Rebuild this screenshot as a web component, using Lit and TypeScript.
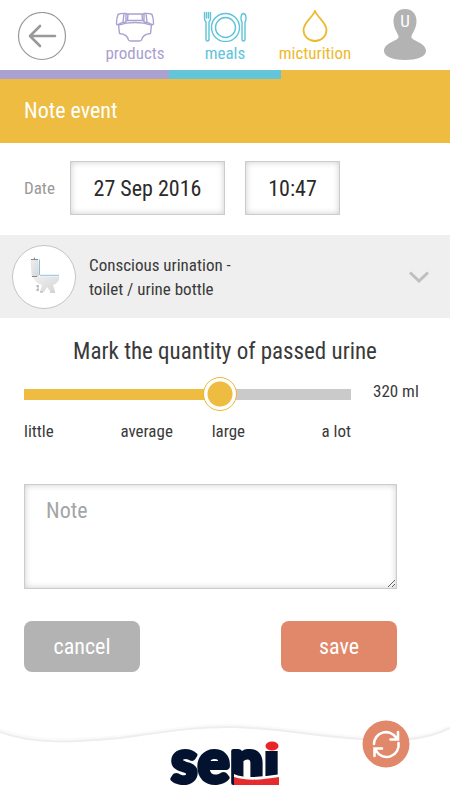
import { LitElement, html, css, svg } from "lit";
import { customElement, state } from "lit/decorators.js";

const diaperIcon = svg`<svg width="40" height="32" viewBox="0 0 40 32" fill="none" stroke="#a9a1cf" stroke-width="1.400" stroke-linejoin="round">
  <path d="M11 3.500Q6 3 3 4.500Q1.500 8 1.500 13.500Q1.500 15 3 14.500Q7 12 11 12Z"/>
  <path d="M29 3.500Q34 3 37 4.500Q38.500 8 38.500 13.500Q38.500 15 37 14.500Q33 12 29 12Z"/>
  <path d="M9 3.500L8 12M31 3.500L32 12M11 4H29M11 10.500H29M13 4L12.500 10.500M27 4L27.500 10.500"/>
  <path d="M3.500 15Q11 12.500 20 12.500Q29 12.500 36.500 15L35.500 23.500Q28 24 26.500 30Q26 31 24 31H16Q14 31 13.500 30Q12 24 4.500 23.500Z"/>
</svg>`;

const mealIcon = svg`<svg width="44" height="32" viewBox="0 0 44 32" fill="none" stroke="#5fc4d9" stroke-width="1.400" stroke-linecap="round">
  <circle cx="22.500" cy="17.500" r="14"/><circle cx="22.500" cy="17.500" r="10"/>
  <path d="M1.500 2.500V8Q1.500 11 3 12V29Q3 31 4.500 31T6 29V12Q7.500 11 7.500 8V2.500M3.500 2.500V8M5.500 2.500V8"/>
  <path d="M40.500 3.500Q38 4 38 8Q38 11 39 12V29Q39 31 40.500 31T42 29V12Q43 11 43 8Q43 4 40.500 3.500Z"/>
</svg>`;

const dropIcon = svg`<svg width="26" height="32" viewBox="0 0 26 32" fill="none" stroke="#edb92e" stroke-width="1.800">
  <path d="M13 1C10 8 1.500 13 1.500 20A11.500 11 0 0 0 24.500 20C24.500 13 16 8 13 1Z"/>
</svg>`;

@customElement("app-root")
export class AppRoot extends LitElement {
  static styles = css`
    :host {
      display: flex;
      flex-direction: column;
      min-height: 100vh;
      background: #fff;
      color: #3a3a3a;
      font: 17px/24px "Roboto Condensed", "Liberation Sans Narrow", Roboto, sans-serif;
    }
    * { box-sizing: border-box; }
    button, input, textarea { font: inherit; color: inherit; }
    button { border: 0; padding: 0; background: none; cursor: pointer; }
    svg { display: block; }
    .top {
      display: grid;
      grid-template-columns: repeat(5, 1fr);
      height: 70px;
    }
    .back { justify-self: start; align-self: start; margin: 12px 0 0 17px; }
    .tab {
      display: flex;
      flex-direction: column;
      align-items: center;
      padding-top: 10px;
      text-decoration: none;
      line-height: 22px;
    }
    .products { color: #a9a1cf; }
    .meals { color: #5fc4d9; }
    .micturition { color: #edb92e; }
    .user { justify-self: center; align-self: start; margin-top: 8px; }
    .stripe { display: flex; height: 9px; background: #edbc40; }
    .stripe-products { flex: 3; background: #a9a1cf; }
    .stripe-meals { flex: 2; background: #62c5da; }
    .stripe-micturition { flex: 3; }
    .title {
      margin: 0;
      padding: 16px 24px;
      background: #edbc40;
      color: #fff;
      font-size: 22px;
      font-weight: 400;
      line-height: 32px;
    }
    .when { display: flex; align-items: center; padding: 18px 24px 20px; }
    .when-label { width: 46px; color: #999; }
    .field {
      height: 54px;
      border: 1px solid #ccc;
      border-radius: 0;
      background: #fff;
      box-shadow: inset 0 0 6px #ccc;
      color: #2a2a2a;
      font-size: 22px;
      text-align: center;
      padding: 0;
      outline: 0;
    }
    .date { width: 155px; margin-right: 20px; }
    .time { width: 95px; }
    .kind {
      display: flex;
      align-items: center;
      gap: 13px;
      width: 100%;
      min-height: 83px;
      padding: 0 21px 0 12px;
      background: #efefef;
      text-align: left;
    }
    .kind-text { flex: 1; }
    .quantity { padding: 18px 24px 0; }
    .question {
      margin: 0;
      font-size: 23px;
      font-weight: 400;
      line-height: 32px;
      text-align: center;
    }
    .scale { display: grid; grid-template-columns: 1fr 75px; padding-top: 8px; }
    .range {
      -webkit-appearance: none;
      appearance: none;
      width: 100%;
      height: 36px;
      margin: 0;
      background: linear-gradient(#edbc40, #edbc40) left center / var(--fill) 11px no-repeat,
        linear-gradient(#cacaca, #cacaca) center / 100% 11px no-repeat;
      outline: 0;
    }
    .range::-webkit-slider-thumb {
      -webkit-appearance: none;
      width: 34px;
      height: 34px;
      border: 1px solid #edb92e;
      border-radius: 50%;
      background: radial-gradient(circle, #edbc40 12px, #fff 13px);
    }
    .amount { padding: 3px 0 0 22px; white-space: nowrap; }
    .marks { display: grid; grid-template-columns: repeat(4, 1fr); padding-top: 7px; text-align: center; }
    .marks-first { text-align: left; }
    .marks-last { text-align: right; }
    .form { padding: 41px 53px 0 24px; }
    .note {
      display: block;
      width: 100%;
      height: 105px;
      padding: 10px 21px;
      text-align: left;
      line-height: 32px;
    }
    .note::placeholder { color: #a5a5a5; }
    .actions { display: flex; justify-content: space-between; padding: 32px 0 24px; }
    .action {
      width: 116px;
      height: 51px;
      border-radius: 8px;
      color: #fff;
      font-size: 22px;
    }
    .cancel { background: #b3b3b3; }
    .save { background: #e1886b; }
    .foot { position: relative; margin-top: auto; height: 80px; }
    .wave { width: 100%; height: 30px; }
    .logo { position: absolute; left: 50%; bottom: 0; margin-left: -56px; }
    .sync { position: absolute; right: 40px; top: 0; }
  `;

  @state() amount = 320;

  render() {
    const fill = `--fill: ${(this.amount / 524) * 100}%`;
    return html`
      <header class="top">
        <button class="back" aria-label="Back">
          <svg width="50" height="50" viewBox="0 0 50 50" fill="none" stroke="#999">
            <circle cx="25" cy="24" r="23.500" stroke-width="1.200"/>
            <path d="M38 24H13.500M23 14L13 24L23 34" stroke-width="2.600" stroke-linecap="round" stroke-linejoin="round"/>
          </svg>
        </button>
        <a class="tab products" href="#products">${diaperIcon}products</a>
        <a class="tab meals" href="#meals">${mealIcon}meals</a>
        <a class="tab micturition" href="#micturition">${dropIcon}micturition</a>
        <button class="user" aria-label="User">
          <svg width="44" height="52" viewBox="0 0 44 52">
            <path d="M22 1C14 1 10.500 7 10.500 13C10.500 20 14 24 15.500 28C17 33 1 34 1 43C1 49 11 52 22 52S43 49 43 43C43 34 27 33 28.500 28C30 24 33.500 20 33.500 13C33.500 7 30 1 22 1Z" fill="#b3b3b3"/>
            <text x="22" y="19" fill="#fff" font-size="17" text-anchor="middle">U</text>
          </svg>
        </button>
      </header>
      <div class="stripe">
        <span class="stripe-products"></span><span class="stripe-meals"></span><span class="stripe-micturition"></span>
      </div>
      <h1 class="title">Note event</h1>
      <div class="when">
        <label class="when-label" for="date">Date</label>
        <input class="field date" id="date" value="27 Sep 2016">
        <input class="field time" aria-label="Time" value="10:47">
      </div>
      <button class="kind">
        <svg width="64" height="64" viewBox="0 0 64 64">
          <defs><linearGradient id="ceramic" x2="1" y2="1"><stop stop-color="#efefef"/><stop offset="1" stop-color="#d3d5d8"/></linearGradient></defs>
          <circle cx="32" cy="32" r="31.500" fill="#fff" stroke="#c4c4c4"/>
          <path d="M19 14.500H26L27 31.500H20Z" fill="url(#ceramic)" stroke="#ddd" stroke-width=".5"/>
          <path d="M27.500 14.500V30" stroke="#8ebbdc"/>
          <path d="M19 14.500H26M22.500 14V12.500M20 31.500H25" stroke="#888"/>
          <path d="M21 32H47.500Q47 38 41 40L43 46H38L35 42L32 47H28L30 40Q23 38 21 32Z" fill="url(#ceramic)"/>
          <path d="M28 30.500H47" stroke="#a7cbe4" stroke-width="1.500"/>
          <path d="M26 40V46M27 41H24M24 45H27M28 47H31M38 47H43" stroke="#aaa"/>
        </svg>
        <span class="kind-text">Conscious urination -<br>toilet / urine bottle</span>
        <svg width="20" height="12" viewBox="0 0 20 12" fill="none" stroke="#bfbfbf" stroke-width="3"><path d="M1 1.500L10 10L19 1.500"/></svg>
      </button>
      <section class="quantity">
        <h2 class="question" id="question">Mark the quantity of passed urine</h2>
        <div class="scale">
          <input class="range" type="range" min="0" max="524" .value=${String(this.amount)} style=${fill}
            aria-labelledby="question"
            @input=${(e: Event) => { this.amount = Number((e.target as HTMLInputElement).value); }}>
          <output class="amount">${this.amount} ml</output>
          <div class="marks">
            <span class="marks-first">little</span><span>average</span><span>large</span><span class="marks-last">a lot</span>
          </div>
        </div>
      </section>
      <section class="form">
        <textarea class="field note" aria-label="Note" placeholder="Note"></textarea>
        <div class="actions">
          <button class="action cancel">cancel</button>
          <button class="action save">save</button>
        </div>
      </section>
      <footer class="foot">
        <svg class="wave" viewBox="0 0 450 30" preserveAspectRatio="none" fill="none">
          <path d="M0 10C35 24 75 21 120 17C170 10 200 5 235 6C290 8 340 19 385 19C410 19 430 17 450 7" stroke="#fafafa" stroke-width="4"/>
          <path d="M0 12C35 25 75 22 120 18C170 11 200 6 235 7C290 9 340 20 385 20C410 20 430 18 450 8" stroke="#eee" stroke-width="2"/>
        </svg>
        <svg class="logo" width="114" height="80" viewBox="0 0 114 80" role="img" aria-label="seni">
          <text x="2" y="63" font-family="Lato, sans-serif" font-weight="900" font-size="60" fill="#03132f" stroke="#03132f" stroke-width="4" stroke-linejoin="round">seni</text>
          <path d="M88 14H114V31H88Z" fill="#fff"/>
          <ellipse cx="103" cy="26" rx="6.500" ry="4.500" fill="#e8262a"/>
          <path d="M65 54C76 59 90 57 113 54V70H65Z" fill="#fff"/>
          <path d="M65 57C78 61 92 60 110 57V65H65Z" fill="#e52b2e"/>
        </svg>
        <button class="sync" aria-label="Refresh">
          <svg width="48" height="48" viewBox="0 0 48 48" fill="none" stroke="#fff" stroke-width="2.600">
            <circle cx="24" cy="24" r="23.500" fill="#e1886b" stroke="none"/>
            <path d="M12 24A12 12 0 0 1 34 17.500M36.500 23A12 12 0 0 1 14 30.500M36 12V19.500H28.500M12.500 36V28.500H20" stroke-linecap="round"/>
          </svg>
        </button>
      </footer>
    `;
  }
}
